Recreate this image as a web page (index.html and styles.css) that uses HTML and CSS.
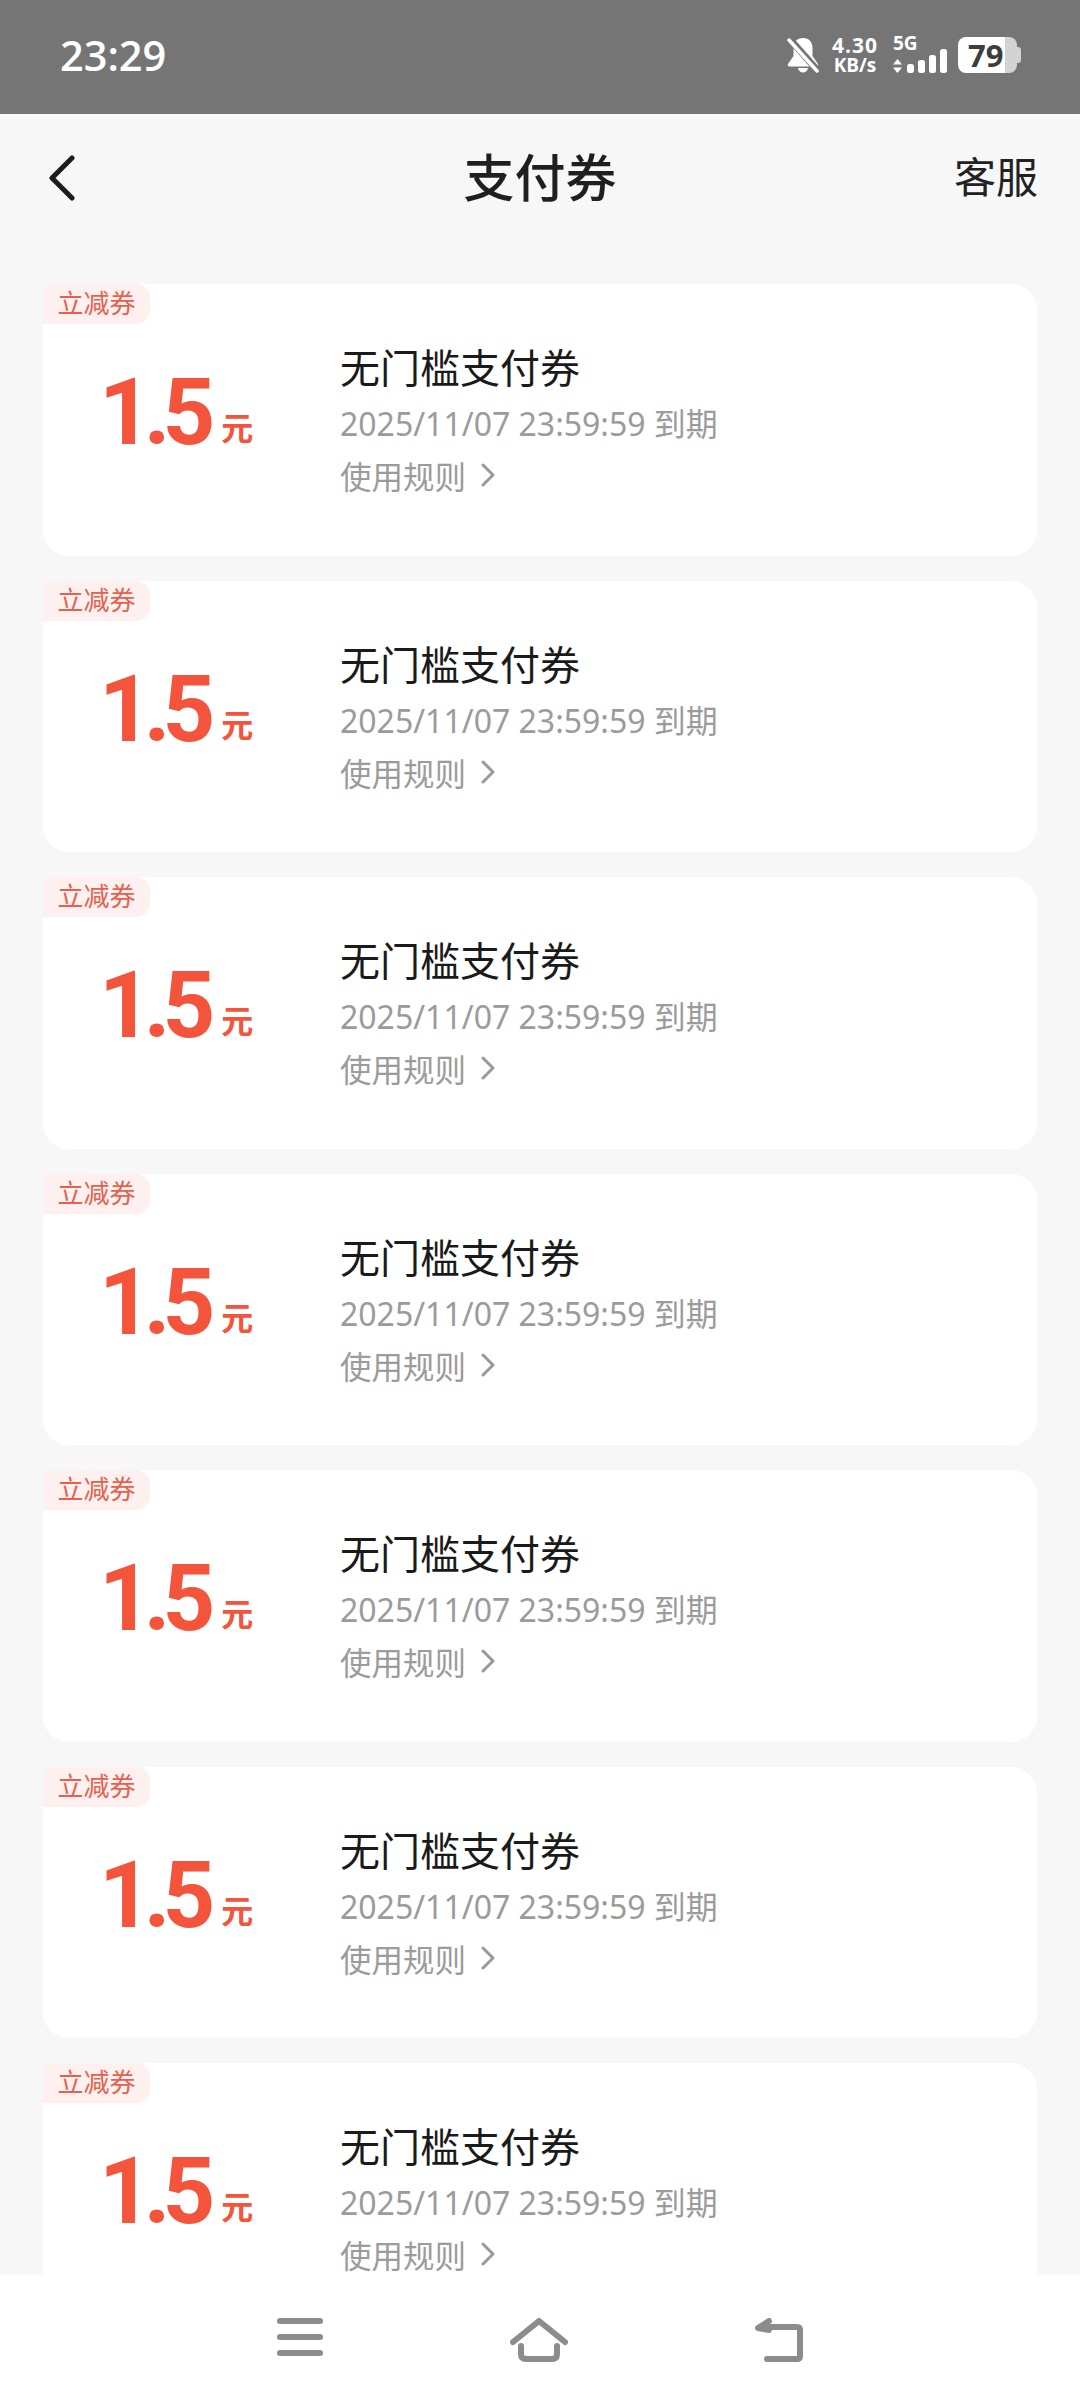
FILE: index.html
```html
<!DOCTYPE html>
<html lang="zh-CN">
<head>
    <meta charset="UTF-8">
    <meta name="viewport" content="width=device-width, initial-scale=1.0">
    <title>支付券</title>
    <link rel="stylesheet" href="styles.css">
</head>
<body>
<div class="page">

    <div class="status-bar">
        <span class="clock">23:29</span>
        <div class="status-icons">
            <svg class="bell" width="32" height="36" viewBox="0 0 32 36">
                <path fill="#fff" d="M16 1c-6 0-9.500 4-9.500 10v8L1 27c-.6 1.200 0 2.500 1.500 2.500h27c1.500 0 2.100-1.300 1.500-2.500l-5.500-8v-8C25.500 5 22 1 16 1z"/>
                <path fill="#fff" d="M11 31h10c-.5 2.800-2.500 4.500-5 4.500s-4.500-1.700-5-4.500z"/>
                <path stroke="#757575" stroke-width="7" d="M0 -1L32 35"/>
                <path stroke="#fff" stroke-width="3.500" stroke-linecap="round" d="M2 3L30 34"/>
            </svg>
            <div class="speed">
                <span class="speed-num">4.30</span>
                <span class="speed-unit">KB/s</span>
            </div>
            <div class="net">
                <span class="net-label">5G</span>
                <svg width="54" height="36" viewBox="0 0 54 36">
                    <path fill="#fff" d="M0 5.500L4.500 0 9 5.500z M0 8.500L4.500 14 9 8.500z" transform="translate(0 22)"/>
                    <rect x="14" y="27" width="7" height="9" rx="2.500" fill="#fff"/>
                    <rect x="25" y="23" width="7" height="13" rx="2.500" fill="#fff"/>
                    <rect x="36" y="18" width="7" height="18" rx="2.500" fill="#fff"/>
                    <rect x="47" y="12" width="7" height="24" rx="2.500" fill="#fff"/>
                </svg>
            </div>
            <div class="battery">
                <div class="battery-body">
                    <span class="battery-level">79</span>
                </div>
                <span class="battery-tip"></span>
            </div>
        </div>
    </div>

    <div class="top-bar">
        <svg class="back" width="30" height="46" viewBox="0 0 30 46">
            <path d="M25 3L5 23L25 43" fill="none" stroke="#1c1c1c" stroke-width="5" stroke-linecap="round" stroke-linejoin="round"/>
        </svg>
        <h1 class="page-title">支付券</h1>
        <a class="service">客服</a>
    </div>

    <div class="coupon-list">
        <div class="coupon">
            <span class="coupon-tag">立减券</span>
            <div class="amount"><span class="amount-num">1.5</span><span class="amount-unit">元</span></div>
            <div class="info">
                <div class="info-title">无门槛支付券</div>
                <div class="info-date">2025/11/07 23:59:59 到期</div>
                <div class="info-rule">使用规则
                    <svg class="chevron" width="14" height="24" viewBox="0 0 14 24"><path d="M2 2L12 12L2 22" fill="none" stroke="#999" stroke-width="3" stroke-linecap="round" stroke-linejoin="round"/></svg>
                </div>
            </div>
        </div>
        <div class="coupon">
            <span class="coupon-tag">立减券</span>
            <div class="amount"><span class="amount-num">1.5</span><span class="amount-unit">元</span></div>
            <div class="info">
                <div class="info-title">无门槛支付券</div>
                <div class="info-date">2025/11/07 23:59:59 到期</div>
                <div class="info-rule">使用规则
                    <svg class="chevron" width="14" height="24" viewBox="0 0 14 24"><path d="M2 2L12 12L2 22" fill="none" stroke="#999" stroke-width="3" stroke-linecap="round" stroke-linejoin="round"/></svg>
                </div>
            </div>
        </div>
        <div class="coupon">
            <span class="coupon-tag">立减券</span>
            <div class="amount"><span class="amount-num">1.5</span><span class="amount-unit">元</span></div>
            <div class="info">
                <div class="info-title">无门槛支付券</div>
                <div class="info-date">2025/11/07 23:59:59 到期</div>
                <div class="info-rule">使用规则
                    <svg class="chevron" width="14" height="24" viewBox="0 0 14 24"><path d="M2 2L12 12L2 22" fill="none" stroke="#999" stroke-width="3" stroke-linecap="round" stroke-linejoin="round"/></svg>
                </div>
            </div>
        </div>
        <div class="coupon">
            <span class="coupon-tag">立减券</span>
            <div class="amount"><span class="amount-num">1.5</span><span class="amount-unit">元</span></div>
            <div class="info">
                <div class="info-title">无门槛支付券</div>
                <div class="info-date">2025/11/07 23:59:59 到期</div>
                <div class="info-rule">使用规则
                    <svg class="chevron" width="14" height="24" viewBox="0 0 14 24"><path d="M2 2L12 12L2 22" fill="none" stroke="#999" stroke-width="3" stroke-linecap="round" stroke-linejoin="round"/></svg>
                </div>
            </div>
        </div>
        <div class="coupon">
            <span class="coupon-tag">立减券</span>
            <div class="amount"><span class="amount-num">1.5</span><span class="amount-unit">元</span></div>
            <div class="info">
                <div class="info-title">无门槛支付券</div>
                <div class="info-date">2025/11/07 23:59:59 到期</div>
                <div class="info-rule">使用规则
                    <svg class="chevron" width="14" height="24" viewBox="0 0 14 24"><path d="M2 2L12 12L2 22" fill="none" stroke="#999" stroke-width="3" stroke-linecap="round" stroke-linejoin="round"/></svg>
                </div>
            </div>
        </div>
        <div class="coupon">
            <span class="coupon-tag">立减券</span>
            <div class="amount"><span class="amount-num">1.5</span><span class="amount-unit">元</span></div>
            <div class="info">
                <div class="info-title">无门槛支付券</div>
                <div class="info-date">2025/11/07 23:59:59 到期</div>
                <div class="info-rule">使用规则
                    <svg class="chevron" width="14" height="24" viewBox="0 0 14 24"><path d="M2 2L12 12L2 22" fill="none" stroke="#999" stroke-width="3" stroke-linecap="round" stroke-linejoin="round"/></svg>
                </div>
            </div>
        </div>
        <div class="coupon">
            <span class="coupon-tag">立减券</span>
            <div class="amount"><span class="amount-num">1.5</span><span class="amount-unit">元</span></div>
            <div class="info">
                <div class="info-title">无门槛支付券</div>
                <div class="info-date">2025/11/07 23:59:59 到期</div>
                <div class="info-rule">使用规则
                    <svg class="chevron" width="14" height="24" viewBox="0 0 14 24"><path d="M2 2L12 12L2 22" fill="none" stroke="#999" stroke-width="3" stroke-linecap="round" stroke-linejoin="round"/></svg>
                </div>
            </div>
        </div>
    </div>

    <div class="nav-bar">
        <svg width="46" height="38" viewBox="0 0 46 38">
            <path d="M3 3H43M3 19H43M3 35H43" fill="none" stroke="#8c8c8c" stroke-width="6" stroke-linecap="round"/>
        </svg>
        <svg width="58" height="44" viewBox="0 0 58 44">
            <path d="M3 24L29 3L55 24" fill="none" stroke="#8c8c8c" stroke-width="6" stroke-linecap="round" stroke-linejoin="round"/>
            <path d="M11 28V36Q11 41 16 41H42Q47 41 47 36V28" fill="none" stroke="#8c8c8c" stroke-width="6" stroke-linecap="round"/>
        </svg>
        <svg width="48" height="44" viewBox="0 0 48 44">
            <path d="M14 3L3 10L14 12V9H42Q45 9 45 12V38Q45 41 42 41H12" fill="none" stroke="#8c8c8c" stroke-width="6" stroke-linecap="round" stroke-linejoin="round"/>
        </svg>
    </div>

</div>
</body>
</html>
```

FILE: styles.css
```css
* {
    box-sizing: border-box;
}
body {
    margin: 0;
    font-family: "Noto Sans CJK SC", "Noto Sans", sans-serif;
    background-color: #f7f7f7;
}
.page {
    display: flex;
    flex-direction: column;
    height: 2400px;
    overflow: hidden;
}

/* status bar */
.status-bar {
    display: flex;
    flex: none;
    justify-content: space-between;
    align-items: center;
    height: 114px;
    padding: 0 59px 4px 60px;
    background-color: #757575;
    color: #fff;
}
.clock {
    font-family: "Open Sans", sans-serif;
    font-size: 41.500px;
    font-weight: 600;
}
.status-icons {
    display: flex;
    align-items: center;
    height: 36px;
}
.bell {
    margin-right: 13px;
}
.speed {
    display: flex;
    flex-direction: column;
    align-items: center;
    margin-top: -2px;
    margin-right: 15px;
    font-family: "Open Sans", sans-serif;
    font-weight: 700;
}
.speed-num {
    font-size: 21px;
    line-height: 22px;
    letter-spacing: 1px;
}
.speed-unit {
    font-size: 19px;
    line-height: 18px;
}
.net {
    position: relative;
    margin-right: 11px;
}
.net svg {
    display: block;
}
.net-label {
    position: absolute;
    top: -6px;
    left: 0;
    font-family: "Open Sans", sans-serif;
    font-size: 19px;
    font-weight: 700;
    line-height: 24px;
}
.battery {
    display: flex;
    align-items: center;
}
.battery-body {
    width: 59px;
    height: 36px;
    padding-left: 10px;
    border-radius: 8px;
    background: linear-gradient(to right, #fff 47px, #d3d3d3 47px);
}
.battery-level {
    display: block;
    font-family: "Open Sans", sans-serif;
    font-size: 31px;
    font-weight: 700;
    line-height: 36px;
    color: #3d3d3d;
}
.battery-tip {
    width: 4px;
    height: 16px;
    border-radius: 0 3px 3px 0;
    background-color: #d3d3d3;
}

/* header */
.top-bar {
    display: flex;
    flex: none;
    justify-content: space-between;
    align-items: center;
    position: relative;
    height: 124px;
    padding: 0 42px 6px 47px;
    border-top: 3px solid #fbfbfb;
}
.back {
    display: block;
    margin-top: 6px;
}
.page-title {
    position: absolute;
    left: 0;
    right: 0;
    margin: 0;
    text-align: center;
    font-size: 51px;
    font-weight: 500;
    color: #1f1f1f;
}
.service {
    font-size: 42px;
    color: #222;
}

/* coupons */
.coupon-list {
    display: flex;
    flex: 1;
    flex-direction: column;
    gap: 25px;
    min-height: 0;
    overflow: hidden;
    padding: 46px 43px 0;
}
.coupon {
    display: flex;
    flex: none;
    position: relative;
    height: 271.500px;
    border-radius: 26px;
    background-color: #fff;
}
.coupon-tag {
    position: absolute;
    top: 0;
    left: 0;
    width: 107px;
    height: 40px;
    border-radius: 8px 14px 14px 0;
    background-color: #fdf0ee;
    color: #e5614f;
    font-size: 26px;
    line-height: 36px;
    text-align: center;
}
.amount {
    width: 297px;
    padding: 75px 0 0 56px;
    color: #f4533c;
    font-family: "Roboto", sans-serif;
    font-weight: 700;
}
.amount-num {
    font-size: 92px;
    line-height: 108px;
    letter-spacing: -8px;
}
.amount-unit {
    margin-left: 14px;
    vertical-align: 4px;
    font-family: "Noto Sans CJK SC", sans-serif;
    font-size: 32px;
}
.info {
    padding-top: 50px;
}
.info-title {
    font-size: 40px;
    line-height: 65px;
    color: #1a1a1a;
}
.info-date {
    font-size: 32px;
    line-height: 50px;
    color: #9b9b9b;
    font-family: "Noto Sans", "Noto Sans CJK SC", sans-serif;
}
.info-rule {
    display: flex;
    align-items: center;
    gap: 15px;
    font-size: 31.500px;
    line-height: 52px;
    color: #9b9b9b;
}
.chevron {
    display: block;
}

/* navigation bar */
.nav-bar {
    display: flex;
    flex: none;
    justify-content: center;
    gap: 187px;
    align-items: flex-start;
    height: 126px;
    padding-top: 44px;
    background-color: #fff;
}
```
